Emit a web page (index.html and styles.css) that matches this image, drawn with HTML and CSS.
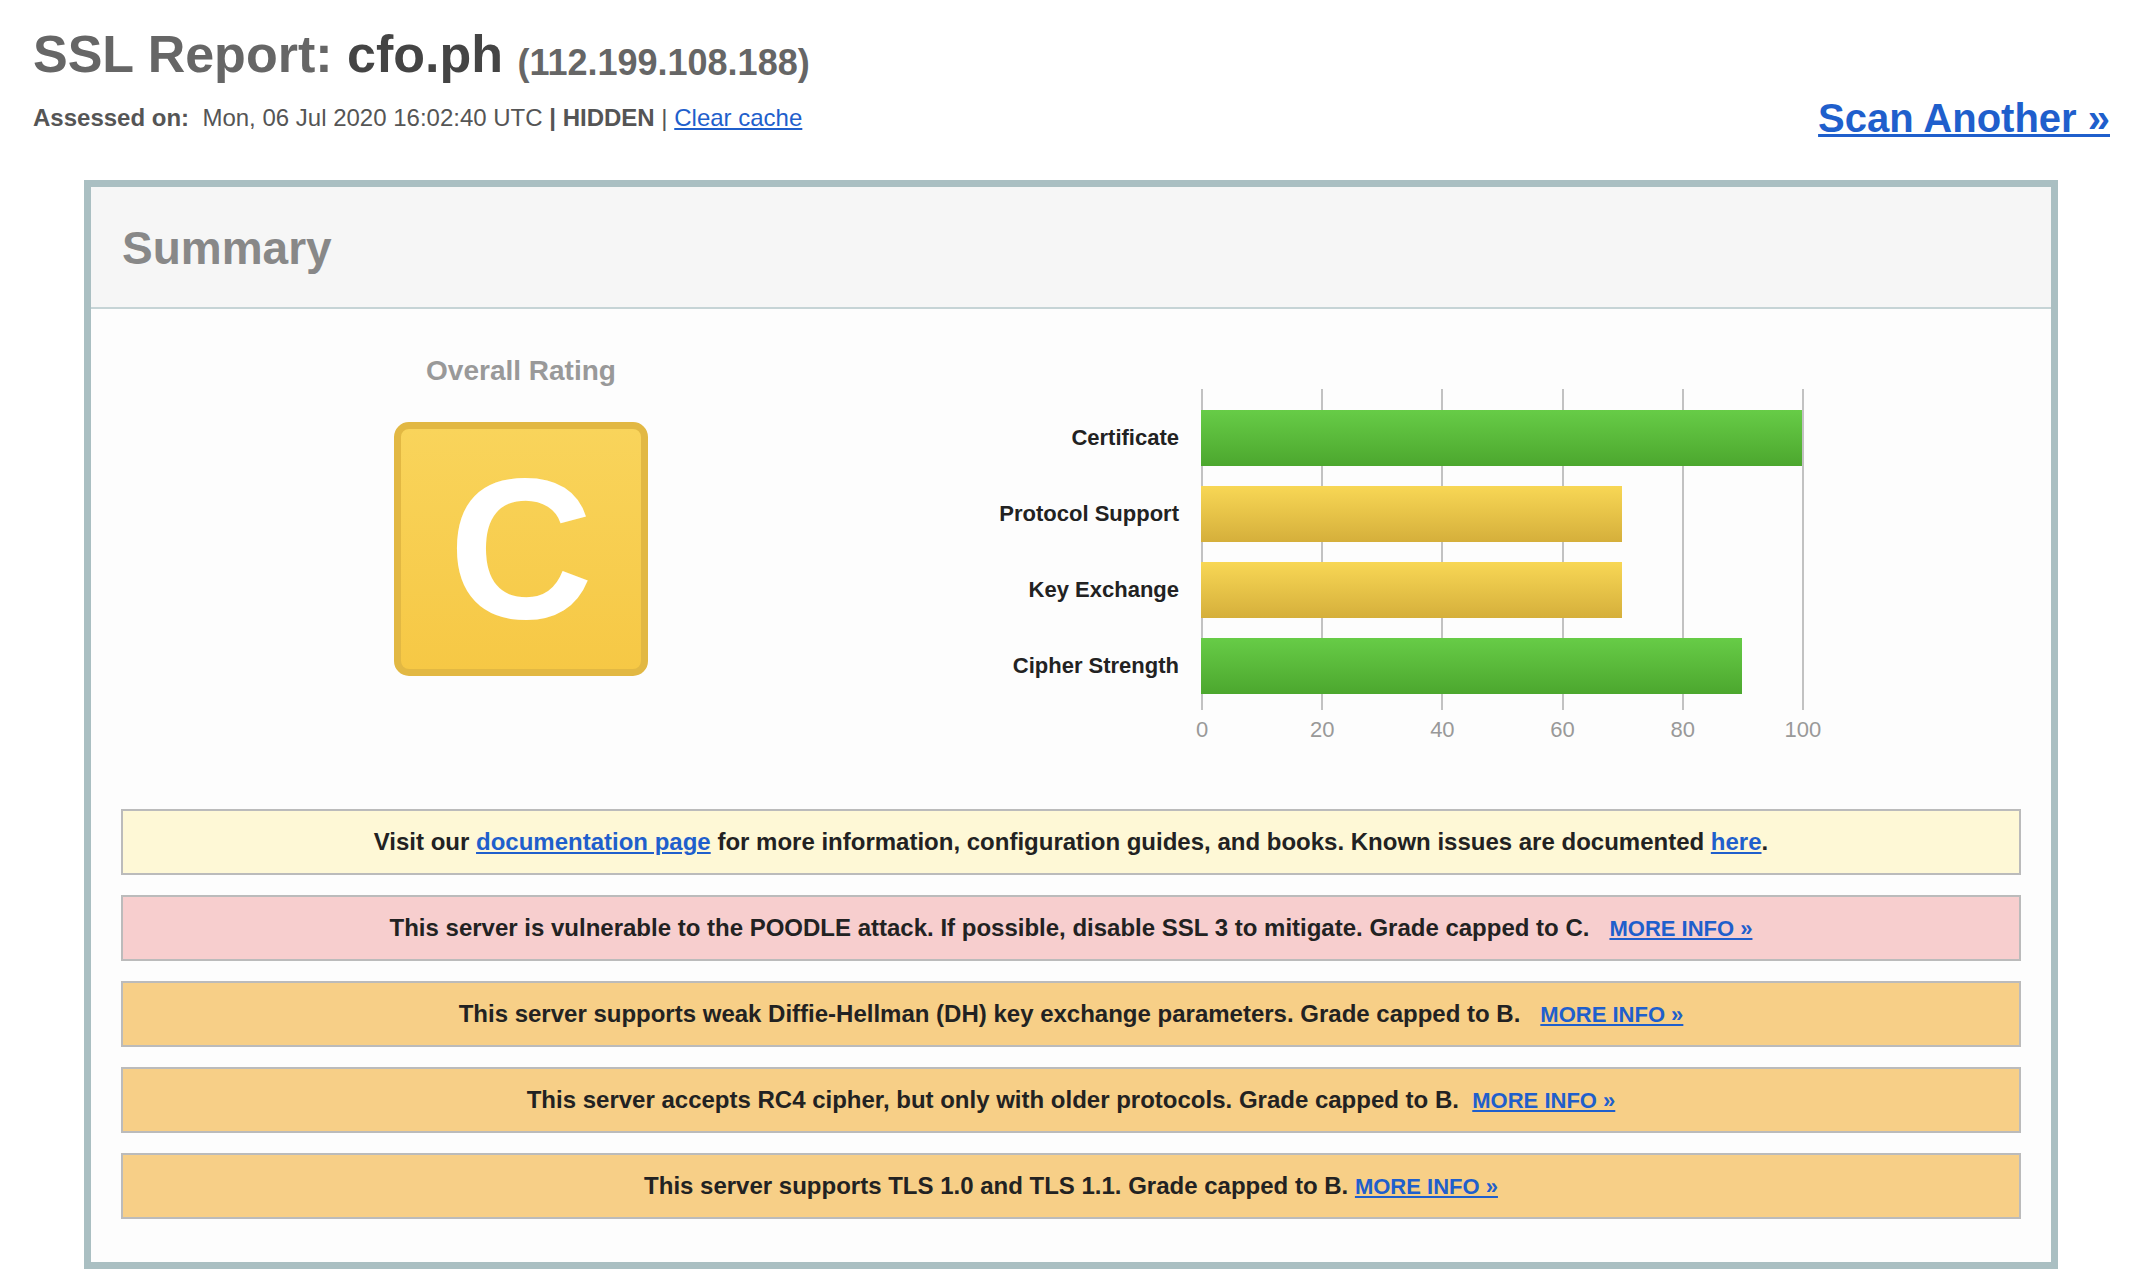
FILE: index.html
```html
<!DOCTYPE html>
<html lang="en">
<head>
<meta charset="utf-8">
<title>SSL Report: cfo.ph</title>
<link rel="stylesheet" href="styles.css">
</head>
<body>
<div class="page">
  <header class="report-header">
    <div class="title-block">
      <h1 class="report-title">SSL Report: <b class="host">cfo.ph</b> <span class="ip">(112.199.108.188)</span></h1>
      <div class="assessed"><b>Assessed on:</b>&nbsp; Mon, 06 Jul 2020 16:02:40 UTC <b>| HIDDEN</b> | <a href="#">Clear cache</a></div>
    </div>
    <a class="scan-another" href="#">Scan Another »</a>
  </header>

  <section class="summary">
    <div class="summary-head"><h2>Summary</h2></div>
    <div class="summary-body">
      <div class="rating-row">
        <div class="overall">
          <div class="overall-label">Overall Rating</div>
          <div class="grade">C</div>
        </div>
        <div class="chart">
          <div class="chart-main">
            <div class="chart-labels">
              <div class="chart-label">Certificate</div>
              <div class="chart-label">Protocol Support</div>
              <div class="chart-label">Key Exchange</div>
              <div class="chart-label">Cipher Strength</div>
            </div>
            <div class="plot">
              <div class="bar green" style="width:601px"></div>
              <div class="bar yellow" style="width:420.7px"></div>
              <div class="bar yellow" style="width:420.7px"></div>
              <div class="bar green" style="width:540.9px"></div>
            </div>
          </div>
          <div class="ticks"><span>0</span><span>20</span><span>40</span><span>60</span><span>80</span><span>100</span></div>
        </div>
      </div>

      <div class="notices">
        <div class="notice info">Visit our <a href="#">documentation page</a> for more information, configuration guides, and books. Known issues are documented <a href="#">here</a>.</div>
        <div class="notice error">This server is vulnerable to the POODLE attack. If possible, disable SSL 3 to mitigate. Grade capped to C.&nbsp;&nbsp; <a class="more" href="#">MORE INFO »</a></div>
        <div class="notice warning">This server supports weak Diffie-Hellman (DH) key exchange parameters. Grade capped to B.&nbsp;&nbsp; <a class="more" href="#">MORE INFO »</a></div>
        <div class="notice warning">This server accepts RC4 cipher, but only with older protocols. Grade capped to B.&nbsp; <a class="more" href="#">MORE INFO »</a></div>
        <div class="notice warning">This server supports TLS 1.0 and TLS 1.1. Grade capped to B. <a class="more" href="#">MORE INFO »</a></div>
      </div>
    </div>
  </section>
</div>
</body>
</html>
```

FILE: styles.css
```css
body {
  margin: 0;
  background: #ffffff;
  font-family: "Liberation Sans", Arial, Helvetica, sans-serif;
  color: #222222;
}

.report-header {
  display: flex;
  justify-content: space-between;
  align-items: flex-start;
  padding: 24px 32px 0 33px;
}

.report-title {
  margin: 0;
  font-size: 52px;
  line-height: 60px;
  font-weight: bold;
  color: #666666;
}

.host {
  color: #444444;
}

.ip {
  font-size: 36px;
  line-height: 1;
  color: #666666;
  vertical-align: -3px;
}

.assessed {
  margin-top: 20px;
  font-size: 24px;
  line-height: 28px;
  color: #555555;
}

.assessed a {
  color: #1f5fcc;
}

.scan-another {
  margin-top: 71px;
  font-size: 40px;
  line-height: 46px;
  font-weight: bold;
  color: #1f5fcc;
  text-decoration-thickness: 3px;
}

.summary {
  margin: 39px 84px 0;
  border: 7px solid #aabfc2;
  background: #fdfdfd;
}

.summary-head {
  box-sizing: border-box;
  height: 122px;
  padding: 35px 31px 0;
  background: #f6f6f6;
  border-bottom: 2px solid #c6d4d6;
}

.summary-head h2 {
  margin: 0;
  font-size: 46px;
  line-height: 53px;
  font-weight: bold;
  color: #888888;
}

.summary-body {
  padding: 0 30px 43px;
}

.rating-row {
  display: flex;
}

.overall {
  width: 800px;
  display: flex;
  flex-direction: column;
  align-items: center;
  padding-top: 46px;
}

.overall-label {
  font-size: 28px;
  line-height: 32px;
  font-weight: bold;
  color: #999999;
}

.grade {
  margin-top: 35px;
  box-sizing: border-box;
  width: 254px;
  height: 254px;
  border: 7px solid #e2b843;
  border-radius: 15px;
  background: linear-gradient(#f9d45b, #f6c845);
  display: flex;
  align-items: center;
  justify-content: center;
  color: #ffffff;
  font-size: 200px;
  line-height: 1;
  font-weight: bold;
}

.chart {
  padding-top: 80px;
}

.chart-main {
  display: flex;
  gap: 22px;
}

.chart-labels {
  width: 258px;
  display: flex;
  flex-direction: column;
  gap: 20px;
  padding: 21px 0 16px;
}

.chart-label {
  height: 56px;
  display: flex;
  align-items: center;
  justify-content: flex-end;
  font-size: 22px;
  font-weight: bold;
  color: #222222;
}

.plot {
  width: 603px;
  display: flex;
  flex-direction: column;
  gap: 20px;
  padding: 21px 0 16px;
  background-image:
    linear-gradient(#c2c2c2, #c2c2c2),
    linear-gradient(#c2c2c2, #c2c2c2),
    linear-gradient(#c2c2c2, #c2c2c2),
    linear-gradient(#c2c2c2, #c2c2c2),
    linear-gradient(#c2c2c2, #c2c2c2),
    linear-gradient(#c2c2c2, #c2c2c2);
  background-size: 2px 100%;
  background-repeat: no-repeat;
  background-position: 0 0, 20% 0, 40% 0, 60% 0, 80% 0, 100% 0;
}

.bar {
  height: 56px;
}

.bar.green {
  background: linear-gradient(#67cc47, #4ca72e);
}

.bar.yellow {
  background: linear-gradient(#f8d755, #d5af3b);
}

.ticks {
  display: flex;
  justify-content: space-between;
  width: 661px;
  margin: 6px 0 0 251px;
}

.ticks span {
  width: 60px;
  text-align: center;
  font-size: 22px;
  line-height: 27px;
  color: #999999;
}

.notices {
  margin-top: 66px;
  display: flex;
  flex-direction: column;
  gap: 20px;
}

.notice {
  height: 66px;
  box-sizing: border-box;
  border: 2px solid #bbbbbb;
  padding: 17px 10px 0;
  font-size: 24px;
  line-height: 28px;
  font-weight: bold;
  text-align: center;
  color: #222222;
}

.notice a {
  color: #1f5fcc;
}

.notice .more {
  font-size: 22px;
  line-height: 1;
}

.notice.info {
  background: #fef8d6;
}

.notice.error {
  background: #f7cece;
}

.notice.warning {
  background: #f7cf87;
}
```
